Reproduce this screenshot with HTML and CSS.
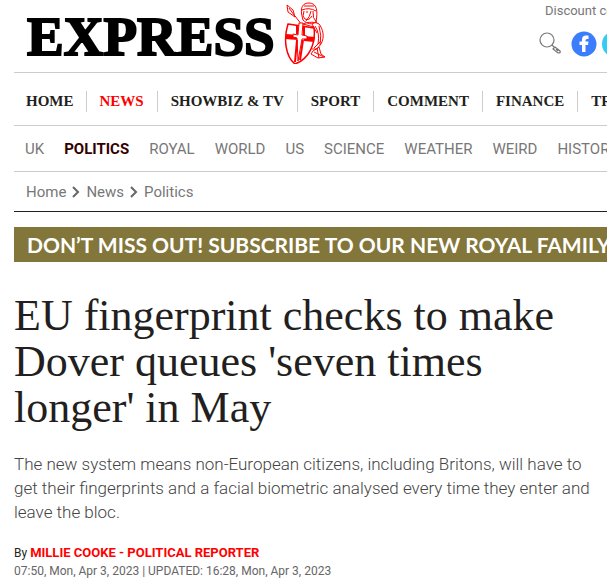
FILE: index.html
```
<!DOCTYPE html>
<html lang="en">
<head>
    <meta charset="UTF-8">
    <meta name="viewport" content="width=device-width, initial-scale=1">
    <title>EU fingerprint checks to make Dover queues 'seven times longer' in May</title>
    <link rel="stylesheet" href="styles.css">
</head>
<body>
    <header class="header">
        <a class="logo" href="#">
            <span class="logo-text">EXPRESS</span>
            <svg class="crusader" viewBox="0 0 42 62" fill="none" stroke="#f00" stroke-width="1" aria-hidden="true">
                <!-- spear -->
                <path d="M3 3 L4 10 L11 15 L9 8 Z M5 6 L10 13 M11 14 L18 23" />
                <!-- helmet and face -->
                <path d="M19 18 C15 5 19 1 25 1 C33 1 34 9 32 20 C28 23 23 22 19 18 Z" fill="#fff" />
                <path d="M18 8 Q25 5 32 9 M20 4 L30 4 M20 9 L19 14 L21 17 M22 10 L24 10 M29 9 Q28 16 33 21 M21 17 Q25 19 28 14 M27 9 Q26 15 22 19" />
                <!-- arm and cloak -->
                <path d="M16 24 C20 20 30 19 35 22 C39 27 41 35 37 42 L33 47 L28 47 M31 24 Q36 31 34 42 M35 24 Q38 34 36 43 M28 22 L33 31 M19 22 L30 25 M30 46 L37 39" />
                <path d="M29 49 L35 45 L37 52 L41 55 L34 56 L27 52 Z M30 50 L40 55 M33 46 L35 56" />
                <!-- shield -->
                <path d="M4 22 L30 26 C32 42 25 57 11 62 C2 55 -1 38 4 22 Z" fill="#fff" stroke-width="1.5" />
                <path d="M2 32 L14 33 L14 38 L1 37 Z M20 34 L31 35 L30 40 L20 39 Z" fill="#f00" stroke="none" />
                <path d="M15 21 L19 21 L18 33 L23 34 L23 37 L18 37 L14 59 L13 36 L9 35 L9 32 L14 33 Z" fill="#fff" />
                <path d="M13 38 L11 60 M19 38 L16 58 M13 24 L13 32 M20 25 L20 33" stroke-width="2" />
            </svg>
        </a>
        <div class="tools">
            <a class="discount" href="#">Discount codes</a>
            <div class="icons">
                <a href="#" aria-label="Search">
                    <svg width="22" height="24" viewBox="0 0 22 24" fill="none" stroke="#777" stroke-width="1.2">
                        <circle cx="8" cy="9" r="7" />
                        <path d="M13 14 L15 16 M14 18 L16 16 L21 20 Q22 22 19 22 Z M17 18 L19 20" />
                    </svg>
                </a>
                <a href="#" aria-label="Facebook">
                    <svg width="26" height="26" viewBox="0 0 26 26">
                        <circle cx="13" cy="13" r="12.5" fill="#3b7dfb" />
                        <path d="M11 21 V14 H8.5 V10.5 H11 V8.5 Q11 4.5 15 4.5 H17.5 V8 H16 Q14.5 8 14.5 9.5 V10.5 H17.5 L17 14 H14.5 V21 Z" fill="#fff" />
                    </svg>
                </a>
                <a href="#" aria-label="Twitter">
                    <svg width="26" height="26" viewBox="0 0 26 26">
                        <circle cx="13" cy="13" r="13" fill="#33ccf4" />
                    </svg>
                </a>
            </div>
        </div>
    </header>

    <nav class="menu" aria-label="Main">
        <a href="#">HOME</a>
        <a class="active" href="#">NEWS</a>
        <a href="#">SHOWBIZ &amp; TV</a>
        <a href="#">SPORT</a>
        <a href="#">COMMENT</a>
        <a href="#">FINANCE</a>
        <a href="#">TRAVEL</a>
    </nav>

    <nav class="submenu" aria-label="News">
        <a href="#">UK</a>
        <a class="active" href="#">POLITICS</a>
        <a href="#">ROYAL</a>
        <a href="#">WORLD</a>
        <a href="#">US</a>
        <a href="#">SCIENCE</a>
        <a href="#">WEATHER</a>
        <a href="#">WEIRD</a>
        <a href="#">HISTORY</a>
    </nav>

    <nav class="breadcrumb" aria-label="Breadcrumb">
        <a href="#">Home</a>
        <svg class="chevron" viewBox="0 0 8 12"><path d="M1 1 L6 6 L1 11" /></svg>
        <a href="#">News</a>
        <svg class="chevron" viewBox="0 0 8 12"><path d="M1 1 L6 6 L1 11" /></svg>
        <a href="#">Politics</a>
    </nav>

    <main>
        <a class="banner" href="#">DON’T MISS OUT! SUBSCRIBE TO OUR NEW ROYAL FAMILY</a>
        <article>
            <h1>EU fingerprint checks to make Dover queues 'seven times longer' in May</h1>
            <p class="intro">The new system means non-European citizens, including Britons, will have to get their fingerprints and a facial biometric analysed every time they enter and leave the bloc.</p>
            <p class="author">By <a href="#">MILLIE COOKE - POLITICAL REPORTER</a></p>
            <p class="date">07:50, Mon, Apr 3, 2023 | UPDATED: 16:28, Mon, Apr 3, 2023</p>
        </article>
    </main>
</body>
</html>
```
FILE: styles.css
```
body {
    margin: 0;
    padding-left: 14px;
    background: #fff;
    color: #231f20;
    font-family: Roboto, sans-serif;
    overflow-x: hidden;
}

a {
    color: inherit;
    text-decoration: none;
}

.header {
    display: flex;
    justify-content: space-between;
    height: 72px;
    border-bottom: 1px solid #ccc;
}

.logo {
    display: flex;
    align-items: flex-start;
    gap: 9px;
    padding: 2px 0 0 13px;
    color: #000;
}

.logo-text {
    font-family: "Liberation Serif", serif;
    font-size: 55px;
    font-weight: bold;
    line-height: 70px;
    -webkit-text-stroke: 2px #000;
}

.crusader {
    width: 42px;
    height: 62px;
}

.tools {
    width: 68px;
    overflow: hidden;
    white-space: nowrap;
}

.discount {
    display: block;
    padding: 2px 0 0 6px;
    color: #777;
    font-size: 13px;
    line-height: 18px;
}

.icons {
    display: flex;
    gap: 10px;
    margin-top: 11px;
}

.icons a {
    flex-shrink: 0;
}

.icons a + a + a {
    margin-left: -5px;
}

.icons svg {
    display: block;
}

.menu {
    display: flex;
    align-items: center;
    height: 48px;
    padding-top: 4px;
    border-bottom: 1px solid #ccc;
    font-family: "Liberation Serif", serif;
    font-size: 15px;
    font-weight: bold;
    line-height: 21px;
    white-space: nowrap;
    overflow: hidden;
}

.menu a {
    padding: 0 13px;
    border-right: 1px solid #ccc;
}

.menu a:first-child {
    padding: 0 12px;
}

.menu .active {
    color: #f00;
}

.submenu {
    display: flex;
    align-items: center;
    gap: 20px;
    height: 45px;
    padding-left: 11px;
    border-bottom: 1px solid #ccc;
    color: #777;
    font-size: 15px;
    white-space: nowrap;
    overflow: hidden;
}

.submenu .active {
    color: #300;
    font-weight: bold;
}

.breadcrumb {
    display: flex;
    align-items: center;
    gap: 6px;
    height: 39px;
    padding-left: 12px;
    border-bottom: 1px solid #231f20;
    color: #777;
    font-size: 15px;
}

.chevron {
    width: 8px;
    height: 12px;
    fill: none;
    stroke: #666;
    stroke-width: 2;
}

.banner {
    display: block;
    margin-top: 15px;
    padding-left: 13px;
    background: #83763a;
    color: #fff;
    font-family: Lato, sans-serif;
    font-size: 21px;
    font-weight: bold;
    line-height: 35px;
    white-space: nowrap;
    overflow: hidden;
}

h1 {
    margin: 31px 14px 0 0;
    font-family: "Liberation Serif", serif;
    font-size: 44px;
    font-weight: normal;
    line-height: 46px;
}

.intro {
    margin: 21px 14px 0 0;
    color: #444;
    font-size: 17px;
    font-weight: 300;
    line-height: 24px;
}

.author,
.date {
    margin: 0;
    font-size: 12px;
    line-height: 18px;
}

.author {
    margin-top: 20px;
}

.author a {
    color: #f00;
    font-size: 13px;
    font-weight: bold;
}

.date {
    color: #666;
}
```
